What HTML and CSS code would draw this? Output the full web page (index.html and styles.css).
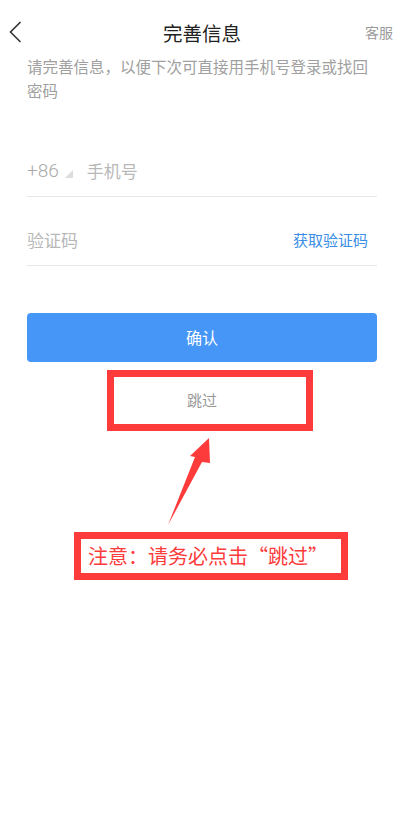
FILE: index.html
```html
<!DOCTYPE html>
<html lang="zh-CN">
<head>
  <meta charset="UTF-8" />
  <title>完善信息</title>
  <link rel="stylesheet" href="styles.css">
</head>
<body>
<div class="screen">

  <div class="header">
    <div class="back">
      <svg width="14" height="24" viewBox="0 0 14 24"><polyline points="11.5,2 1.5,12 11.5,22" fill="none" stroke="#333" stroke-width="1.6"/></svg>
    </div>
    <div class="title">完善信息</div>
    <div class="service">客服</div>
  </div>

  <p class="intro">请完善信息，以便下次可直接用手机号登录或找回密码</p>

  <div class="form">
    <div class="row">
      <span class="code">+86</span>
      <span class="tri"></span>
      <span class="hint phone">手机号</span>
    </div>
    <div class="row row-code">
      <span class="hint">验证码</span>
      <span class="get-code">获取验证码</span>
    </div>
    <div class="confirm">确认</div>
    <div class="skip">跳过</div>
  </div>

  <!-- annotation overlay -->
  <div class="mark mark-skip"></div>
  <svg class="arrow" width="404" height="826" viewBox="0 0 404 826">
    <polygon points="209,438 190,456 195,457 168,525 202,462 210,463" fill="#fd3b3b"/>
  </svg>
  <div class="mark mark-note">注意：请务必点击“跳过”</div>

</div>
</body>
</html>
```

FILE: styles.css
```css
body {
  margin: 0;
  background: #fff;
  font-family: "Noto Sans CJK SC", "Noto Sans", sans-serif;
  color: #333;
}
.screen {
  position: relative;
  width: 404px;
  height: 826px;
  overflow: hidden;
}
.header {
  display: grid;
  grid-template-columns: 1fr auto 1fr;
  align-items: center;
  height: 44px;
  margin-top: 10px;
}
.back {
  padding-left: 9px;
  display: flex;
  align-items: center;
}
.title {
  font-size: 19.5px;
  color: #222;
}
.service {
  text-align: right;
  padding-right: 11px;
  font-size: 14px;
  color: #9a9a9a;
}
.intro {
  margin: 0;
  padding: 0 27px;
  font-size: 15.5px;
  line-height: 24px;
  color: #a0a0a0;
}
.form {
  margin: 43px 27px 0;
}
.row {
  display: flex;
  align-items: center;
  box-sizing: border-box;
  height: 52px;
  border-bottom: 1px solid #e6e6e6;
}
.row-code {
  margin-top: 17px;
  justify-content: space-between;
  padding-right: 9px;
}
.code {
  font-family: Roboto, "Noto Sans", sans-serif;
  font-weight: 300;
  font-size: 19px;
  color: #aaa;
}
.tri {
  width: 0;
  height: 0;
  margin: 6px 0 0 6px;
  border-left: 8px solid transparent;
  border-bottom: 8px solid #ddd;
}
.hint {
  font-size: 17px;
  color: #b8b8b8;
}
.phone {
  margin-left: 14px;
}
.get-code {
  font-size: 15px;
  color: #3a8ee6;
}
.confirm {
  margin-top: 47px;
  height: 49px;
  line-height: 49px;
  border-radius: 4px;
  background: #4596f7;
  color: #fff;
  font-size: 16px;
  text-align: center;
}
.skip {
  height: 76px;
  line-height: 76px;
  text-align: center;
  font-size: 15px;
  color: #999;
}
.mark {
  position: absolute;
  box-sizing: border-box;
  border: 7px solid #fd3b3b;
}
.mark-skip {
  left: 107px;
  top: 370px;
  width: 206px;
  height: 61px;
}
.mark-note {
  left: 74px;
  top: 532px;
  width: 274px;
  height: 48px;
  padding-left: 7px;
  line-height: 34px;
  font-size: 20px;
  color: #fd3b3b;
  white-space: nowrap;
}
.arrow {
  position: absolute;
  left: 0;
  top: 0;
}
```
